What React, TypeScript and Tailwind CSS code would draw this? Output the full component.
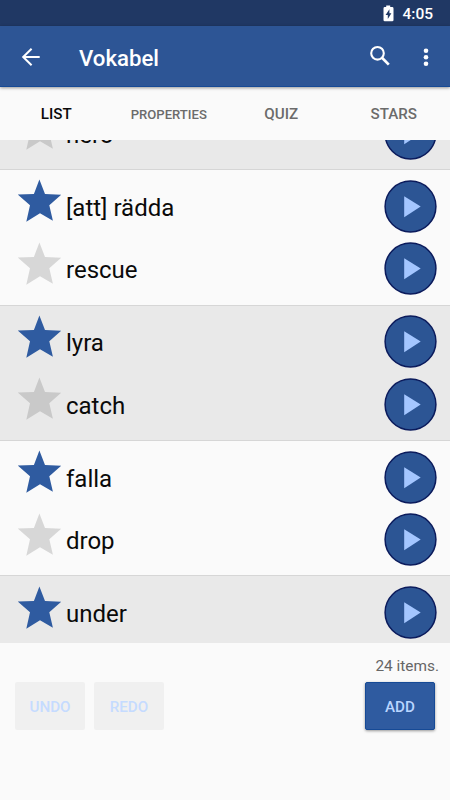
import React from "react";

function Star({ className }: { className: string }) {
  return (
    <svg className={`mb-[12px] h-[44px] w-[44px] shrink-0 ${className}`} viewBox="0 0 44 44" fill="currentColor">
      <path d="M21.4 1.5 27 16 43.2 16.7 31.3 27.2 34.9 42.7 22 35.2 8.300 43.7 12 27.300 -0.2 16.500 15.900 15.900Z" />
    </svg>
  );
}

function PlayButton() {
  return (
    <button className="h-[53px] w-[53px] shrink-0">
      <svg className="block h-[53px] w-[53px]" viewBox="0 0 53 53">
        <circle cx="26.5" cy="26.5" r="25.4" fill="#2c5594" stroke="#0b1b5c" strokeWidth="1.5" />
        <path d="M20.2 16.2 36.7 26.6 20.2 37.2Z" fill="#a4c6ff" />
      </svg>
    </button>
  );
}

function Row({ word, star }: { word: string; star: string }) {
  return (
    <div className="flex h-[62.5px] items-center pr-[13px] pl-[18px]">
      <Star className={star} />
      <span className="mt-[3px] ml-[4px] flex-1 text-[24px] leading-[28px] text-[#0a0a0a]">{word}</span>
      <PlayButton />
    </div>
  );
}

const cards = [
  { front: "[att] rädda", back: "rescue", shaded: false },
  { front: "lyra", back: "catch", shaded: true },
  { front: "falla", back: "drop", shaded: false },
  { front: "under", back: "", shaded: true },
];

export default function App() {
  return (
    <div className="flex h-[800px] w-[450px] flex-col overflow-hidden bg-[#fafafa] font-['Roboto',sans-serif]">
      <div className="flex h-[26px] shrink-0 items-center justify-end bg-[#203864] pr-[17px] text-white">
        <svg className="mr-[8px] h-[17px] w-[11px]" viewBox="0 0 11 17">
          <path d="M3.2 0.5h4v1.6h2q1.3 0 1.3 1.3V15q0 1.3-1.3 1.3H1.8Q.5 16.3 .5 15V3.4q0-1.3 1.3-1.3h1.4Z" fill="#fff" />
          <path d="M6.4 4.2 2.6 10h2.2v4L8.4 8.3H6.4Z" fill="#203864" />
        </svg>
        <span className="mt-[2px] text-[15.5px] leading-5 font-medium">4:05</span>
      </div>
      <header className="z-10 flex h-[61px] shrink-0 items-center border-b border-[#164a96] bg-[#2d5595] text-white shadow-[0_1px_3px_rgba(0,0,0,0.4)]">
        <svg className="mt-px ml-[21px] h-[20px] w-[20px]" viewBox="0 0 20 20" fill="none" stroke="#fff" strokeWidth="2">
          <path d="M18.7 10H2.5M10.6 1.8 2.2 10l8.4 8.2" />
        </svg>
        <h1 className="mt-[4px] ml-[38px] flex-1 text-[22.2px] leading-7 font-medium">Vokabel</h1>
        <svg className="mr-[32px] h-[22px] w-[22px]" viewBox="0 0 22 22" fill="none" stroke="#fff">
          <circle cx="8.5" cy="8.3" r="6.3" strokeWidth="2.1" />
          <path d="m13 12.8 6.8 6.8" strokeWidth="2.7" />
        </svg>
        <svg className="mt-px mr-[21px] h-[20px] w-[6px]" viewBox="0 0 6 20" fill="#fff">
          <circle cx="3" cy="3.7" r="2.3" />
          <circle cx="3" cy="10.2" r="2.3" />
          <circle cx="3" cy="16.7" r="2.3" />
        </svg>
      </header>
      <nav className="grid h-[53px] shrink-0 grid-cols-4 text-center text-[15.2px] leading-[55px] font-medium text-[#6b6b6b]">
        <div className="border-b-2 border-[#0a2d8c] text-[#0a0a0a]">LIST</div>
        <div className="text-[13.1px]">PROPERTIES</div>
        <div>QUIZ</div>
        <div>STARS</div>
      </nav>
      <main className="h-[503px] shrink-0 overflow-hidden">
        <section className="flex h-[29.2px] flex-col justify-end overflow-hidden bg-[#e9e9e9] pb-[4.4px]">
          <div className="shrink-0">
            <Row word="hero" star="text-[#c9c9c9]" />
          </div>
        </section>
        {cards.map((c) => (
          <section
            key={c.front}
            className={`h-[135.4px] border-t border-[#d6d6d6] pt-[5px] ${c.shaded ? "bg-[#e9e9e9]" : "bg-[#fafafa]"}`}
          >
            <Row word={c.front} star="text-[#2f5ba0]" />
            {c.back && <Row word={c.back} star={c.shaded ? "text-[#c9c9c9]" : "text-[#d7d7d7]"} />}
          </section>
        ))}
      </main>
      <footer className="px-[15px]">
        <p className="-mr-[4px] pt-[13px] text-right text-[15.4px] leading-5 text-[#666666]">24 items.</p>
        <div className="mt-[6px] flex h-[48px] text-[15.2px] font-medium">
          <button className="mr-[9px] w-[70px] rounded-[2px] bg-[#f0f0f0] pt-[2px] text-[#c5dbff]">UNDO</button>
          <button className="w-[70px] rounded-[2px] bg-[#f0f0f0] pt-[2px] text-[#c5dbff]">REDO</button>
          <button className="ml-auto w-[70px] rounded-[2px] border border-[#164a96] bg-[#2f5ba0] pt-[2px] text-[#b9d5ff] shadow-[0_1px_3px_rgba(0,0,0,0.4)]">
            ADD
          </button>
        </div>
      </footer>
    </div>
  );
}
